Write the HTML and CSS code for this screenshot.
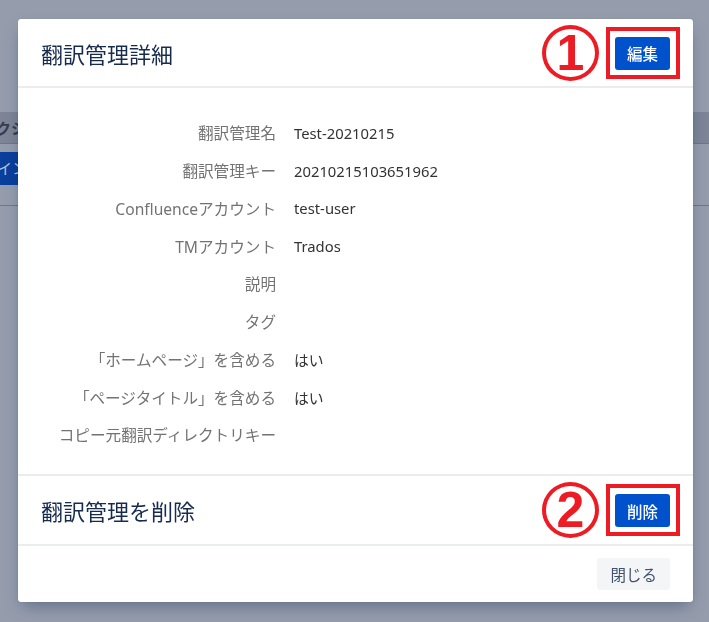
FILE: index.html
```html
<!DOCTYPE html>
<html lang="ja">
<head>
    <meta charset="UTF-8">
    <meta name="viewport" content="width=device-width, initial-scale=1.0">
    <title>翻訳管理詳細</title>
    <link rel="stylesheet" href="styles.css">
</head>
<body>
    <!-- page behind the blanket -->
    <div class="page">
        <div class="table-head">
            <div class="cell first">クション</div>
        </div>
        <div class="table-row">
            <div class="cell selected">インポート</div>
        </div>
    </div>

    <div class="modal">
        <div class="modal-header">
            <h2>翻訳管理詳細</h2>
            <div class="note">
                <span class="note-num">1</span>
                <span class="note-box">
                    <button class="btn btn-primary" type="button">編集</button>
                </span>
            </div>
        </div>

        <div class="modal-body">
            <div class="detail-row">
                <div class="label">翻訳管理名</div>
                <div class="value">Test-20210215</div>
            </div>
            <div class="detail-row">
                <div class="label">翻訳管理キー</div>
                <div class="value">20210215103651962</div>
            </div>
            <div class="detail-row">
                <div class="label">Confluenceアカウント</div>
                <div class="value">test-user</div>
            </div>
            <div class="detail-row">
                <div class="label">TMアカウント</div>
                <div class="value">Trados</div>
            </div>
            <div class="detail-row">
                <div class="label">説明</div>
                <div class="value"></div>
            </div>
            <div class="detail-row">
                <div class="label">タグ</div>
                <div class="value"></div>
            </div>
            <div class="detail-row">
                <div class="label">「ホームページ」を含める</div>
                <div class="value">はい</div>
            </div>
            <div class="detail-row">
                <div class="label">「ページタイトル」を含める</div>
                <div class="value">はい</div>
            </div>
            <div class="detail-row">
                <div class="label">コピー元翻訳ディレクトリキー</div>
                <div class="value"></div>
            </div>
        </div>

        <div class="modal-section">
            <h2>翻訳管理を削除</h2>
            <div class="note">
                <span class="note-num">2</span>
                <span class="note-box">
                    <button class="btn btn-primary" type="button">削除</button>
                </span>
            </div>
        </div>

        <div class="modal-footer">
            <button class="btn btn-subtle" type="button">閉じる</button>
        </div>
    </div>
</body>
</html>
```

FILE: styles.css
```css
body {
    margin: 0;
    padding: 0;
    font-family: 'Noto Sans', 'Noto Sans CJK JP', sans-serif;
    background-color: #959dad;
    overflow: hidden;
}

/* background page */
.page {
    padding-top: 112px;
}

.table-head {
    height: 31px;
    background-color: #7d8597;
    border-bottom: 1px solid #6f778a;
    display: flex;
    align-items: center;
}

.table-row {
    height: 53px;
    padding-top: 8px;
    border-bottom: 1px solid #6f778a;
    display: flex;
    align-items: flex-start;
}

.cell {
    font-size: 15px;
    white-space: nowrap;
}

.cell.first {
    margin-left: -4px;
    color: #343d50;
    font-weight: bold;
}

.cell.selected {
    background-color: #0a3f9c;
    color: #b6c3dc;
    height: 33px;
    line-height: 33px;
    width: 120px;
    margin-left: -3px;
}

/* modal */
.modal {
    position: fixed;
    top: 19px;
    left: 18px;
    width: 675px;
    height: 583px;
    background-color: #fff;
    border-radius: 3px;
    box-shadow: 0 8px 16px -4px rgba(9, 30, 66, 0.35), 0 0 1px rgba(9, 30, 66, 0.31);
    display: flex;
    flex-direction: column;
}

.modal h2 {
    margin: 0;
    font-family: 'Noto Sans CJK JP', sans-serif;
    font-size: 22px;
    font-weight: normal;
    color: #172b4d;
}

.modal-header {
    height: 67px;
    display: flex;
    justify-content: space-between;
    align-items: center;
    padding: 0 13px 0 23px;
    border-bottom: 2px solid #ebecf0;
}

.modal-body {
    height: 340px;
    padding: 26px 0 20px;
    border-bottom: 2px solid #ebecf0;
}

.detail-row {
    display: grid;
    grid-template-columns: 258px 1fr;
    column-gap: 18px;
    height: 37.75px;
    align-items: center;
}

.label {
    text-align: right;
    font-size: 15.6px;
    color: #737373;
    white-space: nowrap;
}

.value {
    font-size: 14.8px;
    color: #333;
}

.modal-section {
    height: 68px;
    display: flex;
    justify-content: space-between;
    align-items: center;
    padding: 0 13px 0 23px;
    border-bottom: 2px solid #ebecf0;
}

.modal-footer {
    height: 56px;
    display: flex;
    justify-content: flex-end;
    align-items: center;
    padding: 0 23px;
}

/* buttons */
.btn {
    font-family: 'Noto Sans CJK JP', sans-serif;
    font-size: 15.5px;
    height: 33px;
    padding: 0 12px;
    border: none;
    border-radius: 3px;
    cursor: pointer;
}

.btn-primary {
    background-color: #0052cc;
    color: #fff;
    font-weight: 500;
}

.btn-subtle {
    height: 32px;
    padding: 0 13px;
    background-color: #f4f5f7;
    color: #42526e;
}

/* red annotations */
.note {
    display: flex;
    align-items: center;
    gap: 7px;
}

.note-num {
    width: 49px;
    height: 48px;
    border: 4px solid #ed1c24;
    border-radius: 50%;
    box-shadow: 0 0 0 1px #fff;
    display: flex;
    justify-content: center;
    align-items: center;
    font-family: 'Liberation Sans', sans-serif;
    font-weight: bold;
    font-size: 50px;
    line-height: 1;
    color: #ed1c24;
}

.note-box {
    display: flex;
    border: 4px solid #ed1c24;
    padding: 6px 6px 5px 5px;
}
```
